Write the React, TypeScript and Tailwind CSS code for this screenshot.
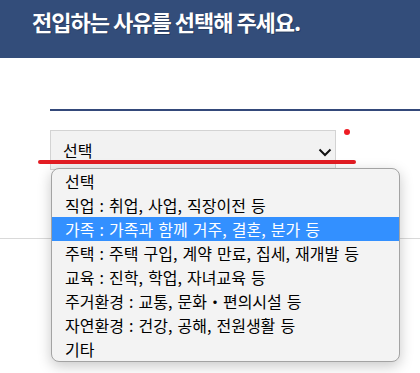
import React from "react";

const options = [
  "선택",
  "직업 : 취업, 사업, 직장이전 등",
  "가족 : 가족과 함께 거주, 결혼, 분가 등",
  "주택 : 주택 구입, 계약 만료, 집세, 재개발 등",
  "교육 : 진학, 학업, 자녀교육 등",
  "주거환경 : 교통, 문화・편의시설 등",
  "자연환경 : 건강, 공해, 전원생활 등",
  "기타",
];

export default function App() {
  return (
    <div
      className="relative w-[420px] h-[373px] overflow-hidden bg-white"
      style={{ fontFamily: '"Noto Sans CJK KR", "Noto Sans", sans-serif' }}
    >
      <div className="h-[58px] bg-[#334d7a] pl-[32px] pt-[5px]">
        <h1 className="text-[22px] font-bold leading-[32px] tracking-[-1px] text-white [text-shadow:1px_1px_0_rgba(0,0,0,0.25)]">
          전입하는 사유를 선택해 주세요.
        </h1>
      </div>
      <div className="h-[181px] border-b border-[#d9d9d9] pl-[50px] pt-[51px]">
        <div className="h-[2px] bg-[#34497a]" />
        <div className="mt-[19px] flex items-start">
          <div className="flex h-[40px] w-[286px] items-center justify-between border border-[#d3d3d3] bg-[#f2f2f2] pl-[12px] pr-[2px]">
            <span className="text-[16px] leading-none text-black">선택</span>
            <svg width="16" height="16" viewBox="0 0 16 16" className="mt-[4px]">
              <path d="M2.5 5.5 L8 11 L13.5 5.5" fill="none" stroke="#111" strokeWidth="2" />
            </svg>
          </div>
          <div className="ml-[8px] mt-[-1px] h-[6px] w-[6px] rounded-full bg-[#ee1c24]" />
        </div>
      </div>
      <div className="absolute left-[38px] top-[160px] h-[4px] w-[318px] rounded-full bg-[#e31c23]" />
      <div className="absolute left-[51px] top-[168px] w-[349px] overflow-hidden rounded-[8px] border border-[#a3a3a3] bg-[#f3f3f3] shadow-[0_4px_14px_rgba(0,0,0,0.22)]">
        {options.map((o, i) => (
          <div
            key={i}
            className={
              "h-[24px] whitespace-nowrap pl-[13px] text-[16px] leading-[24px] [word-spacing:1.5px] " +
              (i === 2 ? "bg-[#3390ff] text-white" : "text-black")
            }
          >
            {o}
          </div>
        ))}
      </div>
    </div>
  );
}
